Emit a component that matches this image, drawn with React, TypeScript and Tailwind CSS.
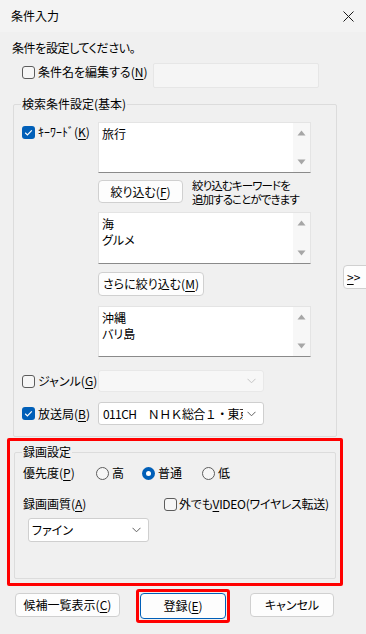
import React from "react";

const U = ({ c }: { c: string }) => (
  <span className="underline underline-offset-[2px] decoration-[1px]">{c}</span>
);

const Check = ({ checked = false }: { checked?: boolean }) =>
  checked ? (
    <span className="w-[13px] h-[13px] shrink-0 rounded-[3px] bg-[#005fb8] flex items-center justify-center">
      <svg width="13" height="13" viewBox="0 0 13 13">
        <path d="M3.2 6.8 L5.4 8.9 L9.8 4.4" fill="none" stroke="#ffffff" strokeWidth="1.2" />
      </svg>
    </span>
  ) : (
    <span className="w-[13px] h-[13px] shrink-0 rounded-[3px] border border-[#5c5c5c] bg-[#f6f6f6]" />
  );

const Radio = ({ checked = false }: { checked?: boolean }) =>
  checked ? (
    <span className="w-[13px] h-[13px] shrink-0 rounded-full bg-[#005fb8] flex items-center justify-center">
      <span className="w-[5px] h-[5px] rounded-full bg-white" />
    </span>
  ) : (
    <span className="w-[13px] h-[13px] shrink-0 rounded-full border border-[#5c5c5c] bg-[#f6f6f6]" />
  );

const Chevron = ({ color = "#5f5f5f" }: { color?: string }) => (
  <svg width="9" height="6" viewBox="0 0 9 6">
    <path d="M0.5 0.8 L4.5 4.8 L8.5 0.8" fill="none" stroke={color} strokeWidth="1" />
  </svg>
);

const TextArea = ({ lines, h }: { lines: string[]; h: string }) => (
  <div
    className={`${h} w-[213px] flex bg-white border border-[#e4e4e4] border-b-[#8a8a8a]`}
  >
    <div className="flex-1 pl-[3px] pt-[3px] leading-[16px]">
      {lines.map((l) => (
        <div key={l}>{l}</div>
      ))}
    </div>
    <div className="w-[17px] bg-[#f7f7f7] flex flex-col items-center justify-between py-[7px]">
      <svg width="9" height="6" viewBox="0 0 9 6">
        <path d="M4.5 0.5 L8.5 5.5 L0.5 5.5 Z" fill="#a6a6a6" />
      </svg>
      <svg width="9" height="6" viewBox="0 0 9 6">
        <path d="M0.5 0.5 L8.5 0.5 L4.5 5.5 Z" fill="#a6a6a6" />
      </svg>
    </div>
  </div>
);

const Btn = ({ children, w, h = "h-[24px]", extra = "" }: { children: React.ReactNode; w: string; h?: string; extra?: string }) => (
  <div
    className={`${w} ${h} shrink-0 rounded-[4px] border border-[#d0d0d0] bg-[#fdfdfd] flex items-center justify-center leading-[14px] ${extra}`}
  >
    {children}
  </div>
);

export default function App() {
  return (
    <div className="w-[366px] h-[634px] overflow-hidden bg-[#f0f0f0] flex flex-col text-[12px] text-black font-['Noto_Sans_CJK_JP','Noto_Sans',sans-serif] [font-feature-settings:'palt']">
      {/* Title bar */}
      <div className="h-[32px] shrink-0 bg-[#f3f3f3] flex items-center justify-between pl-[11px] pr-[12px]">
        <span className="leading-[14px]">条件入力</span>
        <svg width="11" height="11" viewBox="0 0 11 11">
          <path d="M0.5 0.5 L10.5 10.5 M10.5 0.5 L0.5 10.5" stroke="#1a1a1a" strokeWidth="1" />
        </svg>
      </div>

      {/* Intro */}
      <div className="mt-[9px] pl-[12px] h-[14px] leading-[14px] tracking-[-0.4px]">条件を設定してください。</div>

      {/* Condition name row */}
      <div className="mt-[8px] h-[25px] flex items-start pl-[22px]">
        <div className="w-[131px] h-[18px] flex items-center">
          <Check />
          <span className="ml-[3px] leading-[14px] whitespace-nowrap">
            条件名を編集する(<U c="N" />)
          </span>
        </div>
        <div className="w-[166px] h-[25px] bg-[#f5f5f5] border border-[#e6e6e6] rounded-[2px]" />
      </div>

      {/* Basic search group + >> */}
      <div className="mt-[9px] pl-[13px] flex items-start">
        <fieldset className="w-[324px] shrink-0 border border-[#dcdcdc] rounded-[2px] pb-[11px]">
          <legend className="ml-[7px] px-[1px] leading-[14px]">検索条件設定(基本)</legend>

          <div className="mt-[11px] flex">
            <div className="w-[84px] pl-[8px]">
              <div className="mt-[1px] h-[18px] flex items-center">
                <Check checked />
                <span className="ml-[3px] leading-[14px] whitespace-nowrap">
                  ｷｰﾜｰﾄﾞ(<U c="K" />)
                </span>
              </div>
            </div>
            <div className="w-[213px] flex flex-col">
              <TextArea lines={["旅行"]} h="h-[51px]" />
              <div className="mt-[7px] flex items-start h-[23px]">
                <Btn w="w-[85px]" h="h-[23px]">
                  絞り込む(<U c="F" />)
                </Btn>
                <div className="ml-[9px] -mt-[2px] h-[23px] leading-[14px] whitespace-nowrap text-[11.5px] tracking-[-0.9px]">
                  絞り込むキーワードを
                  <br />
                  追加することができます
                </div>
              </div>
              <div className="mt-[9px]">
                <TextArea lines={["海", "グルメ"]} h="h-[52px]" />
              </div>
              <div className="mt-[8px] flex">
                <Btn w="w-[106px]" h="h-[24px]">
                  さらに絞り込む(<U c="M" />)
                </Btn>
              </div>
              <div className="mt-[10px]">
                <TextArea lines={["沖縄", "バリ島"]} h="h-[51px]" />
              </div>
            </div>
          </div>

          {/* Genre */}
          <div className="mt-[13px] h-[22px] flex items-center">
            <div className="w-[84px] pl-[8px] flex items-center">
              <Check />
              <span className="ml-[3px] leading-[14px] whitespace-nowrap">
                ジャンル(<U c="G" />)
              </span>
            </div>
            <div className="w-[166px] h-[22px] bg-[#f7f7f7] border border-[#e8e8e8] rounded-[3px] flex items-center justify-end pr-[7px]">
              <Chevron color="#c4c4c4" />
            </div>
          </div>

          {/* Station */}
          <div className="mt-[10px] h-[23px] flex items-center">
            <div className="w-[84px] pl-[8px] flex items-center">
              <Check checked />
              <span className="ml-[3px] leading-[14px] whitespace-nowrap">
                放送局(<U c="B" />)
              </span>
            </div>
            <div className="w-[166px] h-[23px] bg-white border border-[#cfcfcf] rounded-[3px] flex items-center pl-[4px] pr-[7px]">
              <span className="flex-1 overflow-hidden whitespace-nowrap leading-[14px] [font-feature-settings:normal] tracking-[-0.6px]">
                011CH　ＮＨＫ総合１・東京
              </span>
              <span className="ml-[4px] flex items-center">
                <Chevron />
              </span>
            </div>
          </div>
        </fieldset>

        <div className="ml-[6px] mt-[168px] w-[30px] h-[24px] shrink-0 rounded-[4px] border border-[#d0d0d0] bg-[#fdfdfd] flex items-center pl-[3px] leading-[14px]">
          <U c=">" />&gt;
        </div>
      </div>

      {/* Recording settings (red box) */}
      <div className="mt-[1px] ml-[7px] w-[336px] h-[148px] shrink-0 border-[3px] border-[#ff0000] rounded-[2px] flex flex-col">
        <fieldset className="mt-[4px] ml-[4px] w-[322px] shrink-0 border border-[#dcdcdc] rounded-[2px] pb-[36px]">
          <legend className="ml-[7px] px-[1px] leading-[14px]">録画設定</legend>

          <div className="mt-[5px] h-[18px] flex items-center pl-[8px]">
            <span className="w-[73px] leading-[14px] whitespace-nowrap">
              優先度(<U c="P" />)
            </span>
            <div className="w-[46px] flex items-center">
              <Radio />
              <span className="ml-[3px] leading-[14px]">高</span>
            </div>
            <div className="w-[60px] flex items-center">
              <Radio checked />
              <span className="ml-[3px] leading-[14px]">普通</span>
            </div>
            <div className="flex items-center">
              <Radio />
              <span className="ml-[3px] leading-[14px]">低</span>
            </div>
          </div>

          <div className="mt-[13px] h-[18px] flex items-center pl-[8px]">
            <span className="w-[141px] leading-[14px] whitespace-nowrap">
              録画画質(<U c="A" />)
            </span>
            <Check />
            <span className="ml-[2px] leading-[14px] whitespace-nowrap tracking-[-0.3px]">
              外でも<U c="V" />IDEO(ワイヤレス転送)
            </span>
          </div>

          <div className="mt-[5px] ml-[13px] w-[121px] h-[24px] bg-white border border-[#cfcfcf] rounded-[3px] flex items-center justify-between pl-[3px] pr-[7px]">
            <span className="leading-[14px]">ファイン</span>
            <Chevron />
          </div>
        </fieldset>
      </div>

      {/* Bottom buttons */}
      <div className="mt-[3px] h-[34px] flex items-start">
        <Btn w="w-[105px]" extra="ml-[15px] mt-[4px]">
          候補一覧表示(<U c="C" />)
        </Btn>
        <div className="ml-[16px] w-[94px] h-[34px] shrink-0 border-[3px] border-[#ff0000] rounded-[3px] p-[1px]">
          <div className="w-full h-full rounded-[4px] border border-[#005fb8] bg-[#fdfdfd] flex items-center justify-center leading-[14px]">
            登録(<U c="E" />)
          </div>
        </div>
        <Btn w="w-[84px]" extra="ml-[20px] mt-[4px]">
          キャンセル
        </Btn>
      </div>
    </div>
  );
}
